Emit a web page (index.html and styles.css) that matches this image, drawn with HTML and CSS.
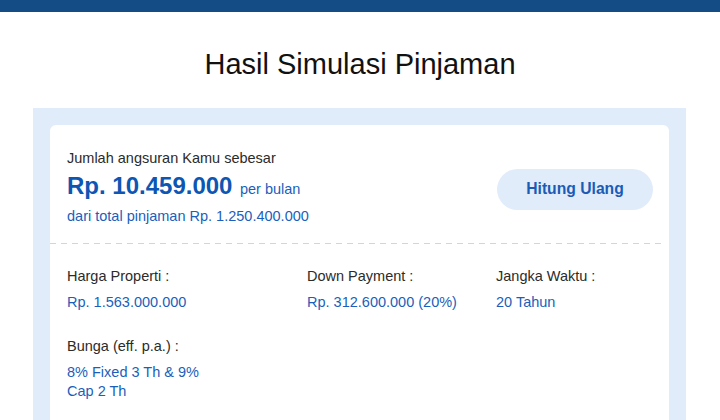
FILE: index.html
```html
<!DOCTYPE html>
<html lang="id">
<head>
<meta charset="utf-8">
<title>Hasil Simulasi Pinjaman</title>
<link rel="stylesheet" href="styles.css">
</head>
<body>
<div class="topbar"></div>
<h1 class="title">Hasil Simulasi Pinjaman</h1>
<div class="panel">
  <div class="card">
    <div class="summary">
      <div class="summary-text">
        <div class="lead">Jumlah angsuran Kamu sebesar</div>
        <div class="amount-line"><span class="amount">Rp. 10.459.000</span> <span class="per">per bulan</span></div>
        <div class="total">dari total pinjaman Rp. 1.250.400.000</div>
      </div>
      <button class="recalc" type="button">Hitung Ulang</button>
    </div>
    <div class="divider"></div>
    <div class="details">
      <div class="item">
        <div class="label">Harga Properti :</div>
        <div class="value">Rp. 1.563.000.000</div>
      </div>
      <div class="item">
        <div class="label">Down Payment :</div>
        <div class="value">Rp. 312.600.000 (20%)</div>
      </div>
      <div class="item">
        <div class="label">Jangka Waktu :</div>
        <div class="value">20 Tahun</div>
      </div>
      <div class="item">
        <div class="label">Bunga (eff. p.a.) :</div>
        <div class="value">8% Fixed 3 Th &amp; 9%<br>Cap 2 Th</div>
      </div>
    </div>
  </div>
</div>
</body>
</html>
```
FILE: styles.css
```css
html, body {
  margin: 0;
  padding: 0;
  background: #ffffff;
  font-family: "Liberation Sans", Arial, Helvetica, sans-serif;
  color: #2b2b2b;
}

.topbar {
  height: 12px;
  background: #144c86;
}

.title {
  margin: 34px 0 26px;
  font-size: 29px;
  line-height: 36px;
  font-weight: 400;
  text-align: center;
  color: #111111;
}

.panel {
  margin: 0 34px 0 33px;
  padding: 17px 17px 0;
  background: #e1ecfb;
  height: 295px;
}

.card {
  background: #ffffff;
  border-radius: 6px 6px 0 0;
  height: 100%;
}

.summary {
  display: flex;
  align-items: center;
  justify-content: space-between;
  padding: 23px 16px 17px 17px;
}

.lead {
  font-size: 14.5px;
  line-height: 20px;
  color: #2b2b2b;
}

.amount-line {
  margin-top: 3px;
  line-height: 30px;
  color: #0d56b3;
}

.amount {
  font-size: 24px;
  font-weight: 700;
}

.per {
  margin-left: 3px;
  font-size: 14.5px;
  color: #1a5fbb;
}

.total {
  margin-top: 2px;
  font-size: 14.5px;
  line-height: 20px;
  color: #1a5fbb;
}

.recalc {
  margin-top: 4px;
  width: 156px;
  height: 41px;
  border: none;
  border-radius: 21px;
  background: #e1ecfb;
  color: #1a5cb5;
  font-family: "Liberation Sans", Arial, Helvetica, sans-serif;
  font-size: 15.7px;
  font-weight: 700;
  cursor: pointer;
}

.divider {
  height: 1px;
  margin-right: 5px;
  background-image: linear-gradient(to right, #c6d7ee 0 6px, transparent 6px 11px);
  background-size: 11px 1px;
  background-repeat: repeat-x;
}

.details {
  display: grid;
  grid-template-columns: 240px 189px 1fr;
  row-gap: 24px;
  padding: 22px 16px 0 17px;
}

.label {
  font-size: 14.5px;
  line-height: 20px;
  color: #2b2b2b;
}

.value {
  margin-top: 7px;
  font-size: 14.5px;
  line-height: 19px;
  color: #1a5fbb;
}
```
